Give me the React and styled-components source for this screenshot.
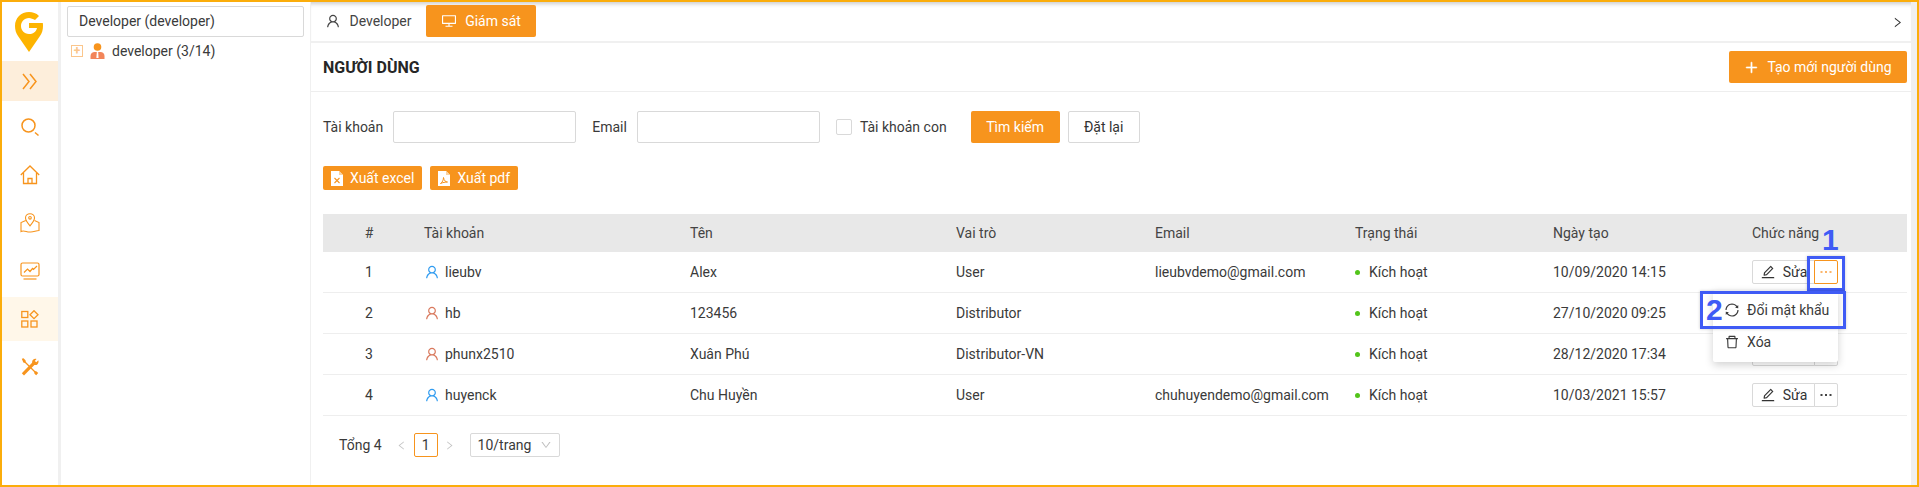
import React from "react";
import styled, { createGlobalStyle } from "styled-components";
import {
  AiOutlineUser,
  AiOutlineDesktop,
  AiOutlinePlus,
  AiOutlineEdit,
  AiOutlineLeft,
  AiOutlineRight,
  AiOutlineDown,
  AiOutlineSync,
  AiOutlineDelete,
} from "react-icons/ai";

const ORANGE = "#f7941d";
const COLS = "92px 266px 266px 199px 200px 198px 199px 164px";

const users = [
  { id: 1, account: "lieubv", name: "Alex", role: "User", email: "lieubvdemo@gmail.com", date: "10/09/2020 14:15", tone: "#2f9bf0", active: true },
  { id: 2, account: "hb", name: "123456", role: "Distributor", email: "", date: "27/10/2020 09:25", tone: "#d9795d" },
  { id: 3, account: "phunx2510", name: "Xuân Phú", role: "Distributor-VN", email: "", date: "28/12/2020 17:34", tone: "#d9795d" },
  { id: 4, account: "huyenck", name: "Chu Huyền", role: "User", email: "chuhuyendemo@gmail.com", date: "10/03/2021 15:57", tone: "#2f9bf0" },
];

const GlobalStyle = createGlobalStyle`
  html, body { margin: 0; padding: 0; background: #fff; }
  body { font-family: Roboto, "Liberation Sans", sans-serif; font-size: 14px; color: #3a3a3a; }
  * { box-sizing: border-box; }
`;

const Logo = () => (
  <svg width="30" height="42" viewBox="0 0 30 42">
    <path d="M15 1C7 1 1 7 1 15c0 4 1 7 3 10l11 16 11-16c2-3 3-6 3-10 0-1 0-2-.2-3H15v5h8c-1 4-4 6-8 6-5 0-8-4-8-8s3-8 8-8c2 0 4 1 6 2l4-4c-3-3-6-4-10-4z" fill="#fdb400" />
  </svg>
);

const ChevronsIcon = () => (
  <svg width="16" height="17" viewBox="0 0 16 17" fill="none" stroke={ORANGE} strokeWidth="1.500">
    <path d="M1 1l6 7.500-6 7.500" />
    <path d="M8 1l6 7.500-6 7.500" />
  </svg>
);

const SearchIcon = () => (
  <svg width="20" height="20" viewBox="0 0 20 20" fill="none" stroke={ORANGE} strokeWidth="1.500">
    <circle cx="8.500" cy="8.500" r="6.500" />
    <path d="M15 15.500l3.500 3" />
  </svg>
);

const HomeIcon = () => (
  <svg width="20" height="20" viewBox="0 0 20 20" fill="none" stroke={ORANGE} strokeWidth="1.300">
    <path d="M.800 10L10 1l9.200 9" />
    <path d="M3.500 8v10.500h13V8" />
    <path d="M8 18.500v-5h4v5" />
  </svg>
);

const MapIcon = () => (
  <svg width="20" height="20" viewBox="0 0 20 20" fill="none" stroke={ORANGE} strokeWidth="1.100">
    <path d="M10 .700C7.500.700 5.500 2.500 5.500 5c0 2.500 2.800 5.800 4.500 7.800 1.700-2 4.500-5.300 4.500-7.800C14.500 2.500 12.500.700 10 .700z" />
    <circle cx="10" cy="4.800" r="1.300" />
    <path d="M5.800 7.500L1 9.500v9c3-1.800 6 1 9 .5 3 .5 6-1.500 9-1.500v-8l-4.500-2" />
  </svg>
);

const ChartIcon = () => (
  <svg width="20" height="18" viewBox="0 0 20 18" fill="none" stroke={ORANGE} strokeWidth="1.200">
    <rect x="1" y="1" width="18" height="13" rx="1.500" />
    <path d="M4 10.500l3.500-3.500 2.500 2.500 2.500-3 1 1L17 4" />
    <path d="M3.500 17h13" />
  </svg>
);

const AppsIcon = () => (
  <svg width="18" height="18" viewBox="0 0 18 18" fill="none" stroke={ORANGE} strokeWidth="1.300">
    <rect x=".800" y="1.500" width="6" height="6" />
    <rect x=".800" y="11" width="6" height="6" />
    <rect x="10" y="11" width="6" height="6" />
    <path d="M13 .700l4 4-4 4-4-4z" />
  </svg>
);

const ToolsIcon = () => (
  <svg width="18" height="18" viewBox="0 0 18 18" fill={ORANGE}>
    <path d="M.800.800l1.700-.500 2 2 .400 1.600 9.100 9.100 1.600.400 1.600 1.600-2 2.200-1.700-1.400-.400-1.700L4 5 2.300 4.500z" />
    <path d="M17.300 2.200l-2 2-1.500-1.200 1.700-2c-2.300-.700-4.700.800-4.400 3.700L.800 15.200l2.200 2.300L13.400 7c2.800.500 4.900-1.800 3.900-4.800z" />
  </svg>
);

const LeaderIcon = () => (
  <svg width="15" height="16" viewBox="0 0 15 16">
    <circle cx="7.500" cy="4" r="3.800" fill={ORANGE} />
    <path d="M0.500 16v-3c0-2.500 2-4 4-4h6c2 0 4 1.500 4 4v3z" fill="#f2855a" />
    <path d="M6.800 9h1.400l.4 6h-2.200z" fill="#fff" />
  </svg>
);

const FileIcon = ({ mark }) => (
  <svg width="12" height="15" viewBox="0 0 12 15">
    <path d="M0 0h8l4 4v11H0z" fill="#fff" />
    <path d="M8 0v4h4z" fill="#fbd3a0" />
    {mark === "x" ? (
      <path d="M3.500 7l5 5m0-5l-5 5" stroke={ORANGE} strokeWidth="1.100" />
    ) : (
      <path d="M2.500 12.500c2-1 3-4 3-6 .5 3 2 4.500 4 4.500-2 0-5 .5-7 1.500z" fill="none" stroke={ORANGE} strokeWidth="1" />
    )}
  </svg>
);

const Dots = () => (
  <svg width="12" height="4" viewBox="0 0 12 4" fill="currentColor">
    <rect x="0.500" y="1" width="2" height="2" />
    <rect x="5" y="1" width="2" height="2" />
    <rect x="9.500" y="1" width="2" height="2" />
  </svg>
);

export default function App() {
  return (
    <>
      <GlobalStyle />
      <Frame>
        <Sidebar>
          <LogoBox>
            <Logo />
          </LogoBox>
          <NavList>
            <NavItem $bg="#fdeedb" $h={40}>
              <ChevronsIcon />
            </NavItem>
            <NavItem>
              <SearchIcon />
            </NavItem>
            <NavItem>
              <HomeIcon />
            </NavItem>
            <NavItem>
              <MapIcon />
            </NavItem>
            <NavItem>
              <ChartIcon />
            </NavItem>
            <NavItem $bg="#fff7e9">
              <AppsIcon />
            </NavItem>
            <NavItem>
              <ToolsIcon />
            </NavItem>
          </NavList>
        </Sidebar>

        <TreePanel>
          <TreeHead>Developer (developer)</TreeHead>
          <TreeRow>
            <Expander>+</Expander>
            <LeaderIcon />
            <span>developer (3/14)</span>
          </TreeRow>
        </TreePanel>

        <Main>
          <TabBar>
            <Tab>
              <AiOutlineUser size={16} />
              Developer
            </Tab>
            <Tab $active>
              <AiOutlineDesktop size={16} />
              Giám sát
            </Tab>
            <TabArrow>
              <AiOutlineRight size={13} />
            </TabArrow>
          </TabBar>

          <TitleBar>
            <Title>NGƯỜI DÙNG</Title>
            <CreateButton>
              <AiOutlinePlus size={15} stroke="currentColor" strokeWidth={40} />
              Tạo mới người dùng
            </CreateButton>
          </TitleBar>

          <Body>
            <SearchRow>
              <Label>Tài khoản</Label>
              <Field />
              <Label $left={16}>Email</Label>
              <Field />
              <CheckWrap>
                <CheckBox />
                Tài khoản con
              </CheckWrap>
              <SearchButton>Tìm kiếm</SearchButton>
              <ResetButton>Đặt lại</ResetButton>
            </SearchRow>

            <ExportRow>
              <ExportButton>
                <FileIcon mark="x" />
                Xuất excel
              </ExportButton>
              <ExportButton>
                <FileIcon mark="p" />
                Xuất pdf
              </ExportButton>
            </ExportRow>

            <Table>
              <HeadRow>
                <IndexCell>#</IndexCell>
                <Cell>Tài khoản</Cell>
                <Cell>Tên</Cell>
                <Cell>Vai trò</Cell>
                <Cell>Email</Cell>
                <Cell>Trạng thái</Cell>
                <Cell>Ngày tạo</Cell>
                <Cell>Chức năng</Cell>
              </HeadRow>
              {users.map((u) => (
                <BodyRow key={u.id}>
                  <IndexCell>{u.id}</IndexCell>
                  <Cell>
                    <AccountName>
                      <AiOutlineUser size={16} color={u.tone} />
                      {u.account}
                    </AccountName>
                  </Cell>
                  <Cell>{u.name}</Cell>
                  <Cell>{u.role}</Cell>
                  <Cell>{u.email}</Cell>
                  <Cell>
                    <Status>Kích hoạt</Status>
                  </Cell>
                  <Cell>{u.date}</Cell>
                  <Cell>
                    <Actions>
                      <EditButton>
                        <AiOutlineEdit size={16} />
                        Sửa
                      </EditButton>
                      <MoreButton $active={u.active}>
                        <Dots />
                      </MoreButton>
                    </Actions>
                  </Cell>
                </BodyRow>
              ))}
            </Table>

            <Pager>
              <span>Tổng 4</span>
              <PagerArrow $left={8}>
                <AiOutlineLeft size={11} />
              </PagerArrow>
              <PageBox>1</PageBox>
              <PagerArrow>
                <AiOutlineRight size={11} />
              </PagerArrow>
              <SizeSelect>
                10/trang
                <AiOutlineDown size={12} color="#bfbfbf" />
              </SizeSelect>
            </Pager>
          </Body>
        </Main>

        <Menu>
          <MenuItem>
            <AiOutlineSync size={16} />
            Đổi mật khẩu
          </MenuItem>
          <MenuItem>
            <AiOutlineDelete size={16} />
            Xóa
          </MenuItem>
        </Menu>

        <MarkBox $x={1805} $y={254} $w={38} $h={35} />
        <MarkBox $x={1698} $y={289} $w={146} $h={38} />
        <MarkNumber $x={1820} $y={221}>1</MarkNumber>
        <MarkNumber $x={1704} $y={291}>2</MarkNumber>
      </Frame>
    </>
  );
}

const Frame = styled.div`
  position: relative;
  display: flex;
  width: 1919px;
  height: 487px;
  overflow: hidden;
  border: 2px solid #fbad0b;
  background: #f0f0f0;
`;

const Sidebar = styled.aside`
  width: 56px;
  flex-shrink: 0;
  background: #fff;
`;

const LogoBox = styled.div`
  height: 59px;
  padding: 9px 3px 0 0;
  display: flex;
  justify-content: center;
`;

const NavList = styled.nav`
  display: flex;
  flex-direction: column;
  gap: 4px;
`;

const NavItem = styled.div`
  height: ${({ $h }) => $h || 44}px;
  display: flex;
  align-items: center;
  justify-content: center;
  background: ${({ $bg }) => $bg || "transparent"};
`;

const TreePanel = styled.section`
  width: 249px;
  margin-left: 3px;
  flex-shrink: 0;
  padding: 4px 6px;
  background: #fff;
`;

const TreeHead = styled.div`
  height: 31px;
  line-height: 29px;
  padding-left: 11px;
  border: 1px solid #d9d9d9;
  border-radius: 2px;
`;

const TreeRow = styled.div`
  display: flex;
  align-items: center;
  height: 28px;
  gap: 7px;
  padding-left: 4px;
`;

const Expander = styled.span`
  width: 12px;
  height: 12px;
  border: 1px solid #fbc68c;
  color: #fbc68c;
  font-size: 12px;
  font-weight: 700;
  line-height: 10px;
  text-align: center;
`;

const Main = styled.main`
  width: 1600px;
  margin-left: 1px;
  background: #fff;
  display: flex;
  flex-direction: column;
`;

const TabBar = styled.div`
  display: flex;
  align-items: flex-end;
  height: 41px;
  padding-bottom: 4px;
  border-bottom: 2px solid #f0f0f0;
  box-shadow: inset 0 5px 4px -3px rgba(0, 0, 0, 0.2);
`;

const Tab = styled.div`
  display: flex;
  align-items: center;
  justify-content: center;
  gap: 8px;
  height: 32px;
  width: ${({ $active }) => ($active ? 110 : 115)}px;
  border-radius: 2px;
  background: ${({ $active }) => ($active ? ORANGE : "transparent")};
  color: ${({ $active }) => ($active ? "#fff" : "#444")};
`;

const TabArrow = styled.div`
  margin-left: auto;
  margin-right: 7px;
  height: 30px;
  display: flex;
  align-items: center;
  color: #333;
`;

const TitleBar = styled.div`
  display: flex;
  align-items: center;
  justify-content: space-between;
  height: 49px;
  padding: 0 4px 0 12px;
  border-bottom: 1px solid #eee;
`;

const Title = styled.h1`
  margin: 0;
  font-size: 16px;
  font-weight: 700;
  color: #262626;
`;

const CreateButton = styled.button`
  display: flex;
  align-items: center;
  justify-content: center;
  gap: 8px;
  width: 178px;
  height: 32px;
  border: 0;
  border-radius: 2px;
  background: ${ORANGE};
  color: #fff;
  font: inherit;
`;

const Body = styled.div`
  padding: 19px 4px 0 12px;
`;

const SearchRow = styled.div`
  display: flex;
  align-items: center;
  height: 32px;
`;

const Label = styled.span`
  margin-left: ${({ $left }) => $left || 0}px;
  margin-right: 10px;
`;

const Field = styled.div`
  width: 183px;
  height: 32px;
  border: 1px solid #d9d9d9;
  border-radius: 2px;
`;

const CheckWrap = styled.label`
  display: flex;
  align-items: center;
  gap: 8px;
  margin-left: 16px;
  margin-right: 24px;
`;

const CheckBox = styled.span`
  width: 16px;
  height: 16px;
  border: 1px solid #d9d9d9;
  border-radius: 2px;
`;

const SearchButton = styled.button`
  width: 89px;
  height: 32px;
  border: 0;
  border-radius: 2px;
  background: ${ORANGE};
  color: #fff;
  font: inherit;
`;

const ResetButton = styled.button`
  width: 72px;
  height: 32px;
  margin-left: 8px;
  border: 1px solid #d9d9d9;
  border-radius: 2px;
  background: #fff;
  color: #333;
  font: inherit;
`;

const ExportRow = styled.div`
  display: flex;
  gap: 8px;
  margin-top: 23px;
`;

const ExportButton = styled.button`
  display: flex;
  align-items: center;
  gap: 7px;
  height: 24px;
  padding: 0 8px;
  border: 0;
  border-radius: 2px;
  background: ${ORANGE};
  color: #fff;
  font: inherit;
`;

const Table = styled.div`
  margin-top: 24px;
`;

const HeadRow = styled.div`
  display: grid;
  grid-template-columns: ${COLS};
  height: 38px;
  align-items: center;
  background: #e8e8e8;
  color: #444;
`;

const BodyRow = styled.div`
  display: grid;
  grid-template-columns: ${COLS};
  height: 41px;
  align-items: center;
  border-bottom: 1px solid #eee;
`;

const Cell = styled.div`
  padding-left: 9px;
`;

const IndexCell = styled.div`
  text-align: center;
`;

const AccountName = styled.span`
  display: flex;
  align-items: center;
  gap: 5px;
`;

const Status = styled.span`
  display: flex;
  align-items: center;
  gap: 9px;
  &::before {
    content: "";
    width: 5px;
    height: 5px;
    border-radius: 50%;
    background: #52c41a;
  }
`;

const Actions = styled.div`
  display: flex;
`;

const EditButton = styled.button`
  display: flex;
  align-items: center;
  justify-content: center;
  gap: 7px;
  width: 63px;
  height: 24px;
  padding: 0;
  border: 1px solid #d9d9d9;
  border-radius: 2px 0 0 2px;
  background: #fff;
  color: #333;
  font: inherit;
`;

const MoreButton = styled.button`
  display: flex;
  align-items: center;
  justify-content: center;
  width: 24px;
  height: 24px;
  padding: 0;
  margin-left: -1px;
  border: 1px solid ${({ $active }) => ($active ? ORANGE : "#d9d9d9")};
  border-radius: 0 2px 2px 0;
  background: #fff;
  color: ${({ $active }) => ($active ? "#fbb56a" : "#444")};
`;

const Pager = styled.div`
  display: flex;
  align-items: center;
  height: 24px;
  margin-top: 17px;
  padding-left: 16px;
`;

const PagerArrow = styled.span`
  display: flex;
  width: 24px;
  justify-content: center;
  margin-left: ${({ $left }) => $left || 0}px;
  color: #c4c4c4;
`;

const PageBox = styled.span`
  width: 24px;
  height: 24px;
  line-height: 22px;
  text-align: center;
  border: 1px solid ${ORANGE};
  border-radius: 2px;
`;

const SizeSelect = styled.div`
  display: flex;
  align-items: center;
  justify-content: space-between;
  width: 90px;
  height: 24px;
  margin-left: 8px;
  padding: 0 7px;
  border: 1px solid #d9d9d9;
  border-radius: 2px;
`;

const Menu = styled.div`
  position: absolute;
  left: 1711px;
  top: 288px;
  width: 125px;
  padding: 4px 0;
  background: #fff;
  border-radius: 2px;
  box-shadow: 0 3px 8px rgba(0, 0, 0, 0.18);
`;

const MenuItem = styled.div`
  display: flex;
  align-items: center;
  gap: 7px;
  height: 32px;
  padding-left: 11px;
`;

const MarkBox = styled.div`
  position: absolute;
  left: ${({ $x }) => $x}px;
  top: ${({ $y }) => $y}px;
  width: ${({ $w }) => $w}px;
  height: ${({ $h }) => $h}px;
  border: 3px solid #3f5bf5;
  box-shadow: 0 0 3px rgba(0, 0, 0, 0.2);
`;

const MarkNumber = styled.div`
  position: absolute;
  left: ${({ $x }) => $x}px;
  top: ${({ $y }) => $y}px;
  font-family: "Liberation Sans", sans-serif;
  font-size: 30px;
  font-weight: 700;
  line-height: 34px;
  color: #3f5bf5;
`;
